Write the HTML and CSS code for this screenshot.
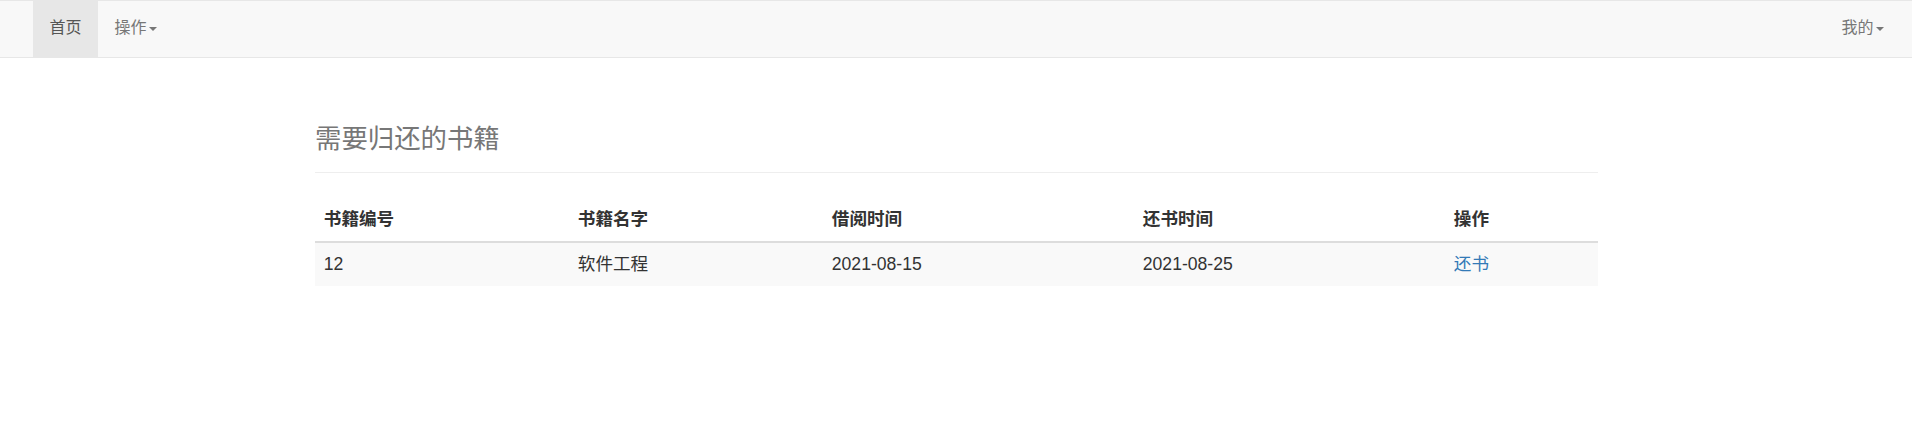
FILE: index.html
```html
<!DOCTYPE html>
<html lang="zh-CN">
<head>
<meta charset="utf-8">
<title>需要归还的书籍</title>
<link rel="stylesheet" href="styles.css">
</head>
<body>
<nav class="navbar">
  <ul class="nav nav-left">
    <li class="nav-item active"><a href="#">首页</a></li>
    <li class="nav-item"><a href="#">操作<span class="caret"></span></a></li>
  </ul>
  <ul class="nav nav-right">
    <li class="nav-item"><a href="#">我的<span class="caret"></span></a></li>
  </ul>
</nav>
<main class="container">
  <div class="page-header">
    <h3 class="title">需要归还的书籍</h3>
  </div>
  <table class="table">
    <colgroup>
      <col class="c1"><col class="c2"><col class="c3"><col class="c4"><col class="c5">
    </colgroup>
    <thead>
      <tr><th>书籍编号</th><th>书籍名字</th><th>借阅时间</th><th>还书时间</th><th>操作</th></tr>
    </thead>
    <tbody>
      <tr class="odd"><td>12</td><td>软件工程</td><td>2021-08-15</td><td>2021-08-25</td><td><a class="link" href="#">还书</a></td></tr>
    </tbody>
  </table>
</main>
</body>
</html>
```
FILE: styles.css
```css
html, body {
  margin: 0;
  padding: 0;
  background: #fff;
}
body {
  font-family: "Liberation Sans", "Noto Sans CJK SC", sans-serif;
  color: #333;
  font-size: 15.4px;
}
a { text-decoration: none; }

.navbar {
  display: flex;
  justify-content: space-between;
  height: 56px;
  background: #f8f8f8;
  border-top: 1px solid #e7e7e7;
  border-bottom: 1px solid #e7e7e7;
  padding: 0 12px 0 33px;
}
.nav {
  display: flex;
  list-style: none;
  margin: 0;
  padding: 0;
}
.nav-item a {
  display: flex;
  align-items: center;
  height: 56px;
  padding: 0 16.5px 2px;
  box-sizing: border-box;
  color: #777;
  font-size: 16px;
  line-height: 22px;
}
.nav-item.active a {
  background: #e7e7e7;
  color: #555;
}
.caret {
  display: inline-block;
  width: 0;
  height: 0;
  margin-left: 2px;
  margin-top: 2px;
  border-top: 4.4px solid #777;
  border-left: 4.4px solid transparent;
  border-right: 4.4px solid transparent;
}

.container {
  width: 1283px;
  margin: 0 auto;
  padding-left: 1px;
}
.page-header {
  margin-top: 67px;
  padding-bottom: 18px;
  border-bottom: 1px solid #eee;
}
.title {
  margin: 0;
  font-size: 26.4px;
  line-height: 29px;
  font-weight: 400;
  color: #777;
}
.table {
  width: 100%;
  margin-top: 24px;
  border-collapse: collapse;
  border-spacing: 0;
  font-size: 17.6px;
}
.c1 { width: 254px; }
.c2 { width: 254px; }
.c3 { width: 311px; }
.c4 { width: 311px; }
.table th, .table td {
  padding: 8.8px;
  line-height: 26px;
  text-align: left;
  vertical-align: top;
}
.table th {
  font-weight: 700;
  color: #333;
  border-bottom: 2px solid #ddd;
}
.table tr.odd td {
  background: #f9f9f9;
}
.link { color: #337ab7; }
```
